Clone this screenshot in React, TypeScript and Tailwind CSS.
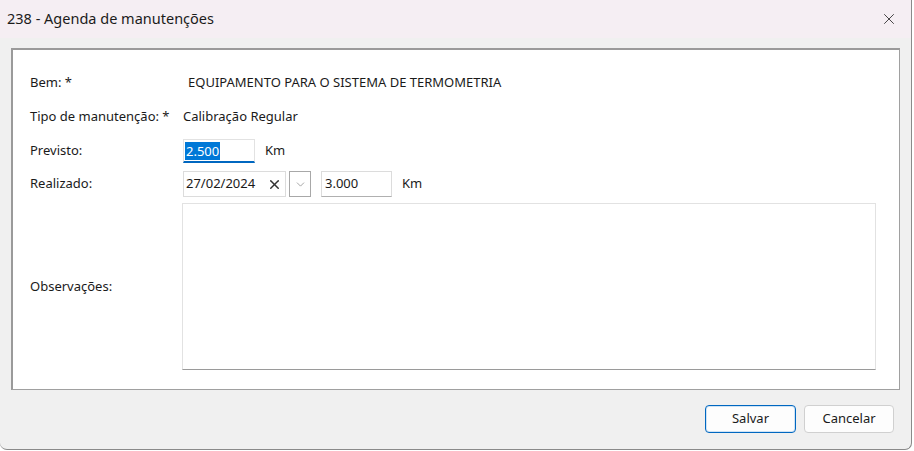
import { X, ChevronDown } from 'lucide-react';

const FONT = "font-['Segoe_UI','Noto_Sans','Liberation_Sans',sans-serif]";

export default function App() {
  return (
    <div className={`${FONT} w-[914px] h-[451px] bg-white text-[13px] text-[#1a1a1a]`}>
      <div className="w-[912px] h-[450px] flex flex-col rounded-b-[7px] border-r border-b border-[#8a8a8a] bg-[#f0f0f0] overflow-hidden">
        {/* Title bar */}
        <div className="h-[38px] shrink-0 flex items-center justify-between pl-[7px] pr-[13px] bg-[#f5eef3]">
          <span className="text-[14.5px] text-[#1b1b1b]">238 - Agenda de manutenções</span>
          <X size={18} strokeWidth={1.1} className="text-[#222]" />
        </div>

        {/* Form panel */}
        <div className="mx-[11px] mt-[10px] h-[342px] bg-white border border-[#a0a0a0] border-l-[2px] border-t-[2px] border-l-[#9a9a9a] border-t-[#9a9a9a] pl-[17px] pr-[20px] pt-[20px] flex flex-col">
          <div className="flex items-center h-[24px] mt-[1px]">
            <span className="w-[157px]">Bem: *</span>
            <span className="ml-[1px]">EQUIPAMENTO PARA O SISTEMA DE TERMOMETRIA</span>
          </div>
          <div className="flex items-center h-[24px] mt-[10px]">
            <span className="w-[153px]">Tipo de manutenção: *</span>
            <span>Calibração Regular</span>
          </div>
          <div className="flex items-center h-[24px] mt-[10px]">
            <span className="w-[153px]">Previsto:</span>
            <div className="w-[72px] h-[24px] border border-[#e2e2e2] border-b-2 border-b-[#0067c0] flex items-center pl-[1px]">
              <span className="bg-[#0078d7] text-white px-[1px] leading-[18px]">2.500</span>
            </div>
            <span className="ml-[10px]">Km</span>
          </div>
          <div className="flex items-center h-[26px] mt-[8px]">
            <span className="w-[153px]">Realizado:</span>
            <div className="w-[103px] h-[26px] border border-[#dcdcdc] flex items-center justify-between pl-[2px] pr-[3px]">
              <span>27/02/2024</span>
              <X size={15} strokeWidth={2.4} className="text-[#333]" />
            </div>
            <div className="ml-[3px] w-[22px] h-[26px] border border-[#a8a8a8] flex items-center justify-center">
              <ChevronDown size={13} strokeWidth={1.2} className="text-[#777]" />
            </div>
            <div className="ml-[10px] w-[71px] h-[26px] border border-[#dcdcdc] border-b-[#b0b0b0] flex items-center pl-[3px]">
              3.000
            </div>
            <span className="ml-[10px]">Km</span>
          </div>
          <div className="flex items-center mt-[6px]">
            <span className="w-[152px]">Observações:</span>
            <div className="w-[694px] h-[167px] border border-[#e2e2e2] border-b-[#9a9a9a]" />
          </div>
        </div>

        {/* Buttons */}
        <div className="flex justify-end gap-[8px] pr-[17px] mt-[15px]">
          <button className="w-[91px] h-[28px] rounded-[4px] border border-[#0067c0] bg-[#fdfdfd] text-[13px] shadow-[inset_0_0_0_1px_#cfe3f5]">
            Salvar
          </button>
          <button className="w-[90px] h-[28px] rounded-[4px] border border-[#d0d0d0] bg-[#fdfdfd] text-[13px]">
            Cancelar
          </button>
        </div>
      </div>
    </div>
  );
}
